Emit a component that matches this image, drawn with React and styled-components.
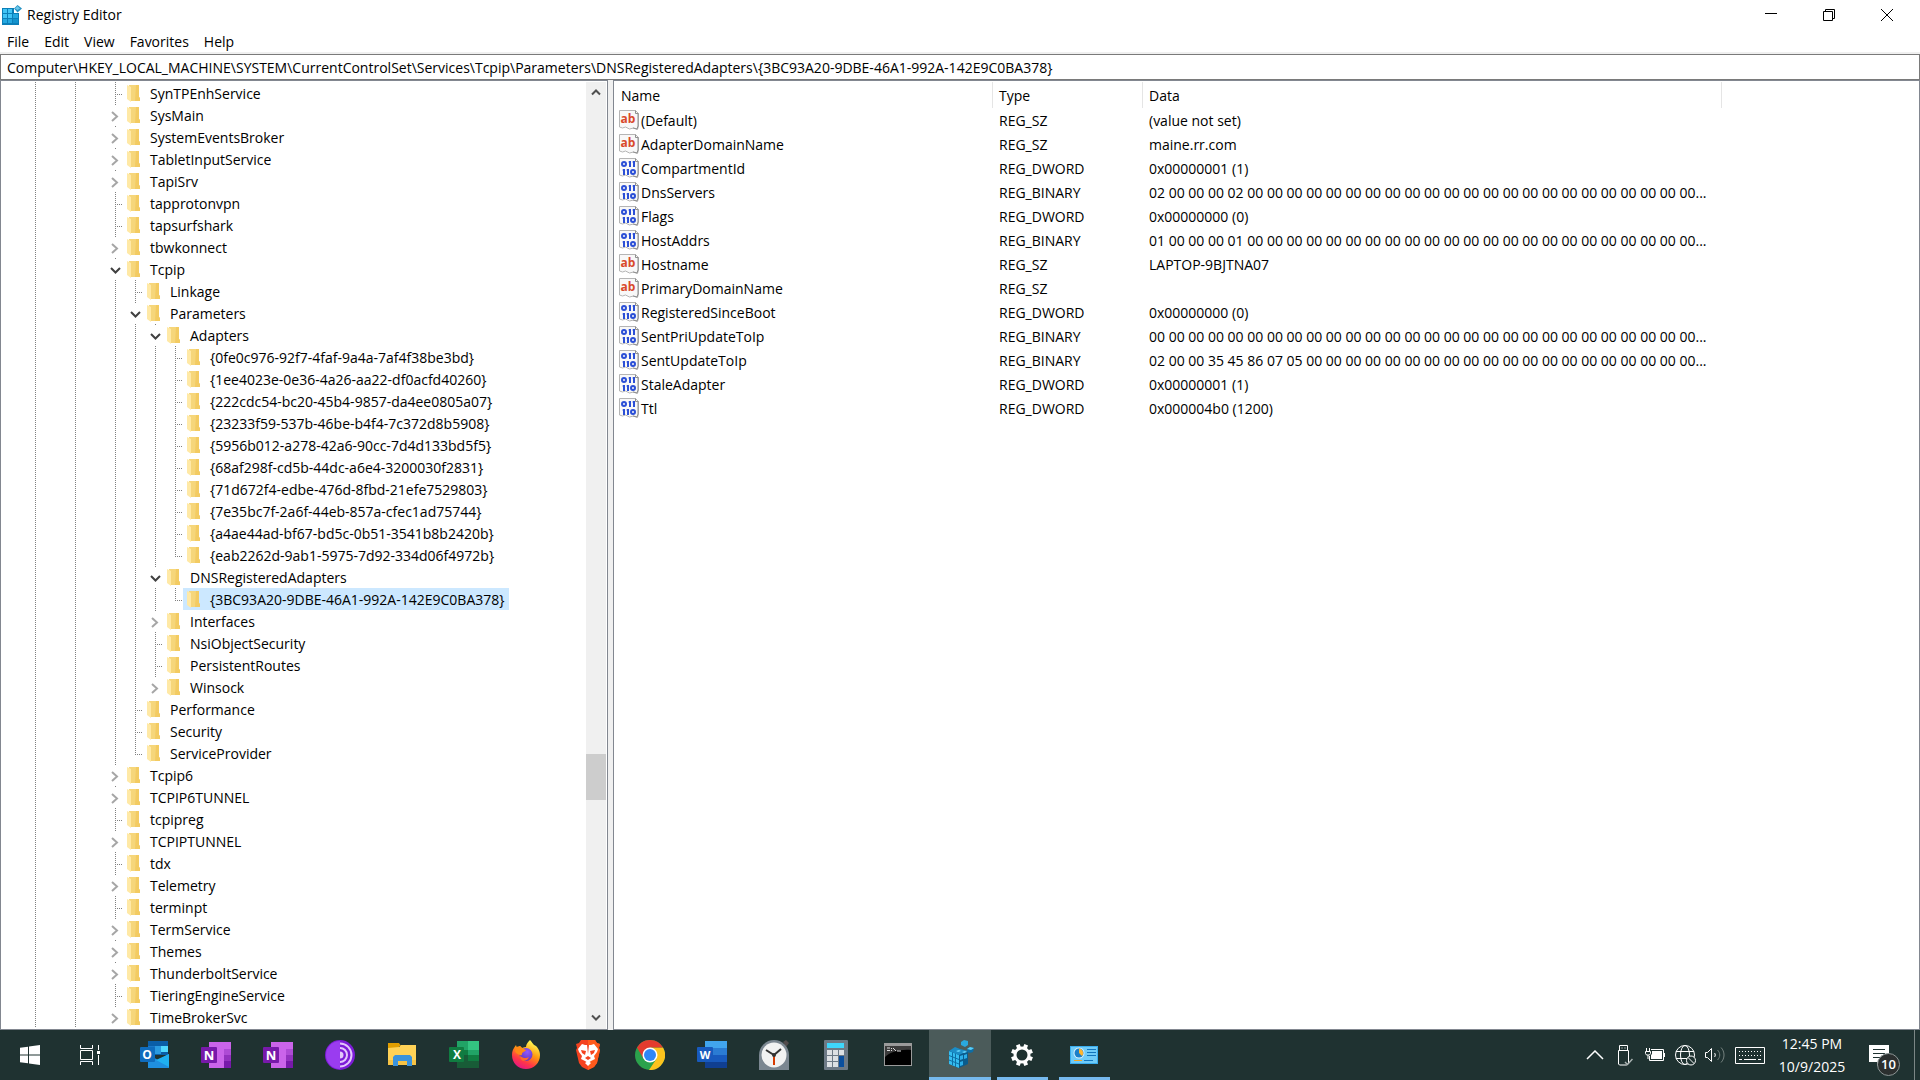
import React from "react";
import styled, { createGlobalStyle, css } from "styled-components";

const GlobalStyle = createGlobalStyle`
  * {
    box-sizing: border-box;
  }
  body {
    margin: 0;
    background: #fff;
    color: #000;
    font-family: "Open Sans", "Noto Sans", sans-serif;
    font-size: 14px;
    line-height: 22px;
  }
  button, input {
    font: inherit;
    color: inherit;
    border: none;
    background: none;
    padding: 0;
    margin: 0;
  }
  svg {
    display: block;
    flex: none;
  }
`;

const Window = styled.div`
  display: flex;
  flex-direction: column;
  height: 100vh;
  overflow: hidden;
`;

const TitleBar = styled.header`
  display: flex;
  align-items: center;
  height: 30px;
  padding: 0 4px 0 2px;
`;

const Title = styled.h1`
  flex: 1;
  margin: 0 0 0 5px;
  font-size: 14px;
  font-weight: 400;
`;

const WindowButton = styled.button`
  width: 58px;
  height: 30px;
  display: flex;
  align-items: center;
  justify-content: center;
`;

const MenuBar = styled.nav`
  display: flex;
  gap: 15px;
  height: 24px;
  padding: 0 7px;
  border-bottom: 2px solid #f0f0f0;
`;

const MenuItem = styled.button`
  height: 22px;
  padding-top: 1px;
`;

const Address = styled.input`
  width: 100%;
  height: 26px;
  flex: none;
  padding: 0 6px;
  border: 1px solid #7a7a7a;
  outline: none;
`;

const Body = styled.main`
  flex: 1;
  min-height: 0;
  display: flex;
  gap: 5px;
  background: #f0f0f0;
`;

const TreePane = styled.section`
  width: 608px;
  flex: none;
  display: flex;
  background: #fff;
  border: 1px solid #828790;
  padding: 1px 1px 0 0;
`;

const Tree = styled.ul`
  flex: 1;
  list-style: none;
  margin: 0;
  padding: 0 0 0 22px;
  overflow: hidden;
`;

const TreeRow = styled.li`
  display: flex;
  height: 22px;
`;

const dots = (dir) =>
  `repeating-linear-gradient(${dir}, #808080 0 1px, transparent 1px 2px)`;

// one 20px column of the tree: | line, + tee, L last child, > closed, v open
const lineStyles = {
  ".": css``,
  "|": css`
    background: ${dots("to bottom")} 12px 0 / 1px 22px no-repeat;
  `,
  "+": css`
    background: ${dots("to bottom")} 12px 0 / 1px 22px no-repeat,
      ${dots("to right")} 12px 12px / 8px 1px no-repeat;
  `,
  L: css`
    background: ${dots("to bottom")} 12px 0 / 1px 12px no-repeat,
      ${dots("to right")} 12px 12px / 8px 1px no-repeat;
  `,
  ">": css`
    background: ${dots("to bottom")} 12px 0 / 1px 1px no-repeat;
  `,
  v: css`
    background: ${dots("to bottom")} 12px 0 / 1px 1px no-repeat;
  `,
};

const Guide = styled.span`
  width: 20px;
  flex: none;
  ${({ $line }) => lineStyles[$line]}
`;

const Expander = styled.button`
  width: 20px;
  flex: none;
  padding: 2px 0 0 4px;
  display: flex;
  align-items: center;
  justify-content: center;
  ${({ $line }) => lineStyles[$line]}
`;

const KeyLabel = styled.span`
  display: flex;
  align-items: center;
  gap: 10px;
  padding: 0 4px;
  white-space: nowrap;
  background: ${({ $selected }) => ($selected ? "#cce8ff" : "none")};
`;

const KeyName = styled.span`
  padding-top: 2px;
`;

const ScrollBar = styled.div`
  width: 20px;
  display: grid;
  grid-template-rows: 21px 652fr 46px 208fr 21px;
  background: #f0f0f0;
`;

const ScrollArrow = styled.button`
  display: flex;
  align-items: center;
  justify-content: center;
  padding: 0 1px 2px 0;
`;

const ScrollThumb = styled.div`
  grid-row: 3;
  background: #cdcdcd;
`;

const ListPane = styled.section`
  flex: 1;
  min-width: 0;
  background: #fff;
  border: 1px solid #828790;
  padding-top: 1px;
  overflow: hidden;
`;

const ValueTable = styled.table`
  width: 100%;
  table-layout: fixed;
  border-collapse: separate;
  border-spacing: 0;
`;

const Heading = styled.th`
  width: ${({ $width }) => $width || "auto"};
  height: 26px;
  padding: 2px 6px 0;
  text-align: left;
  font-weight: 400;
  border-right: ${({ $width }) => ($width ? "1px solid #e5e5e5" : "none")};

  &:first-child {
    padding-left: 7px;
  }
`;

const Cell = styled.td`
  height: 24px;
  padding: 2px 6px 0;
  white-space: nowrap;
  overflow: hidden;
`;

const NameCell = styled(Cell)`
  padding: 0 5px;
`;

const ValueName = styled.div`
  display: flex;
  align-items: center;
  gap: 2px;
  height: 24px;
`;

const ValueText = styled.span`
  padding-top: 2px;
`;

const TaskBar = styled.footer`
  display: flex;
  flex: none;
  height: 50px;
  background: #1f3231;
  color: #fff;
`;

const AppButtons = styled.div`
  display: flex;
  padding-left: 3px;
`;

const TaskButton = styled.button`
  width: ${({ $narrow }) => ($narrow ? "60px" : "62px")};
  height: 50px;
  display: flex;
  align-items: center;
  justify-content: center;
  background: ${({ $active }) => ($active ? "#4b5b5a" : "none")};
  border-bottom: ${({ $active }) => ($active ? "3px solid #76b9ed" : "none")};
  padding-top: ${({ $active }) => ($active ? "3px" : "0")};
  ${({ $running }) =>
    $running &&
    css`
      background: linear-gradient(#76b9ed, #76b9ed) center bottom / 51px 3px
        no-repeat;
    `}
`;

const Tray = styled.div`
  flex: 1;
  display: flex;
  align-items: center;
  justify-content: flex-end;
`;

const TrayButton = styled.button`
  width: ${({ $wide }) => ($wide ? "40px" : "30px")};
  height: 50px;
  display: flex;
  align-items: center;
  justify-content: center;
`;

const Clock = styled.button`
  width: 84px;
  line-height: 23px;
  text-align: center;
`;

const Notifications = styled.button`
  position: relative;
  width: 60px;
  height: 50px;
  padding-left: 15px;
`;

const Badge = styled.span`
  position: absolute;
  left: 23px;
  bottom: 4px;
  width: 23px;
  height: 23px;
  border: 1px solid #8c9595;
  border-radius: 50%;
  background: #2b2f2f;
  font-size: 13px;
  font-weight: 600;
  line-height: 20px;
  text-align: center;
`;

const ShowDesktop = styled.button`
  width: 6px;
  height: 50px;
  border-left: 1px solid #7b8685;
`;

const KEYS = [
  ["|.|.+", "SynTPEnhService"],
  ["|.|.>", "SysMain"],
  ["|.|.>", "SystemEventsBroker"],
  ["|.|.>", "TabletInputService"],
  ["|.|.>", "TapiSrv"],
  ["|.|.+", "tapprotonvpn"],
  ["|.|.+", "tapsurfshark"],
  ["|.|.>", "tbwkonnect"],
  ["|.|.v", "Tcpip"],
  ["|.|.|+", "Linkage"],
  ["|.|.|v", "Parameters"],
  ["|.|.||v", "Adapters"],
  ["|.|.|||+", "{0fe0c976-92f7-4faf-9a4a-7af4f38be3bd}"],
  ["|.|.|||+", "{1ee4023e-0e36-4a26-aa22-df0acfd40260}"],
  ["|.|.|||+", "{222cdc54-bc20-45b4-9857-da4ee0805a07}"],
  ["|.|.|||+", "{23233f59-537b-46be-b4f4-7c372d8b5908}"],
  ["|.|.|||+", "{5956b012-a278-42a6-90cc-7d4d133bd5f5}"],
  ["|.|.|||+", "{68af298f-cd5b-44dc-a6e4-3200030f2831}"],
  ["|.|.|||+", "{71d672f4-edbe-476d-8fbd-21efe7529803}"],
  ["|.|.|||+", "{7e35bc7f-2a6f-44eb-857a-cfec1ad75744}"],
  ["|.|.|||+", "{a4ae44ad-bf67-bd5c-0b51-3541b8b2420b}"],
  ["|.|.|||L", "{eab2262d-9ab1-5975-7d92-334d06f4972b}"],
  ["|.|.||v", "DNSRegisteredAdapters"],
  ["|.|.|||L", "{3BC93A20-9DBE-46A1-992A-142E9C0BA378}"],
  ["|.|.||>", "Interfaces"],
  ["|.|.||+", "NsiObjectSecurity"],
  ["|.|.||+", "PersistentRoutes"],
  ["|.|.||>", "Winsock"],
  ["|.|.|+", "Performance"],
  ["|.|.|+", "Security"],
  ["|.|.|L", "ServiceProvider"],
  ["|.|.>", "Tcpip6"],
  ["|.|.>", "TCPIP6TUNNEL"],
  ["|.|.+", "tcpipreg"],
  ["|.|.>", "TCPIPTUNNEL"],
  ["|.|.+", "tdx"],
  ["|.|.>", "Telemetry"],
  ["|.|.+", "terminpt"],
  ["|.|.>", "TermService"],
  ["|.|.>", "Themes"],
  ["|.|.>", "ThunderboltService"],
  ["|.|.+", "TieringEngineService"],
  ["|.|.>", "TimeBrokerSvc"],
];

const SELECTED = "{3BC93A20-9DBE-46A1-992A-142E9C0BA378}";
const PATH =
  "Computer\\HKEY_LOCAL_MACHINE\\SYSTEM\\CurrentControlSet\\Services\\Tcpip\\Parameters\\DNSRegisteredAdapters\\" +
  SELECTED;

// the data column shows 28 bytes and then cuts off
const bytes = (start) => {
  const list = start.split(" ");
  while (list.length < 28) list.push("00");
  return list.join(" ") + "...";
};

const VALUES = [
  ["(Default)", "REG_SZ", "(value not set)"],
  ["AdapterDomainName", "REG_SZ", "maine.rr.com"],
  ["CompartmentId", "REG_DWORD", "0x00000001 (1)"],
  ["DnsServers", "REG_BINARY", bytes("02 00 00 00 02")],
  ["Flags", "REG_DWORD", "0x00000000 (0)"],
  ["HostAddrs", "REG_BINARY", bytes("01 00 00 00 01")],
  ["Hostname", "REG_SZ", "LAPTOP-9BJTNA07"],
  ["PrimaryDomainName", "REG_SZ", ""],
  ["RegisteredSinceBoot", "REG_DWORD", "0x00000000 (0)"],
  ["SentPriUpdateToIp", "REG_BINARY", bytes("00")],
  ["SentUpdateToIp", "REG_BINARY", bytes("02 00 00 35 45 86 07 05")],
  ["StaleAdapter", "REG_DWORD", "0x00000001 (1)"],
  ["Ttl", "REG_DWORD", "0x000004b0 (1200)"],
];

const FolderIcon = () => (
  <svg width="13" height="17" viewBox="0 0 13 17">
    <path d="M2 0h10v12l1 1v3H3z" fill="#f6d67a" />
    <path d="M9 0h3v12l1 1v3H8z" fill="#f3cb62" />
    <path d="M0 0l4 2v15l-4-3z" fill="#ffe9a6" />
  </svg>
);

const ClosedIcon = () => (
  <svg width="8" height="11" viewBox="0 0 8 11" fill="none" stroke="#a6a6a6" strokeWidth="2">
    <path d="M1 1l5 4.500-5 4.500" />
  </svg>
);

const OpenIcon = () => (
  <svg width="11" height="7" viewBox="0 0 11 7" fill="none" stroke="#404040" strokeWidth="2">
    <path d="M1 1l4.500 4.500L10 1" />
  </svg>
);

const ScrollIcon = ({ down }) => (
  <svg width="10" height="8" viewBox="0 0 10 8" fill="none" stroke="#505050" strokeWidth="2">
    <path d={down ? "M1 1.500l4 4 4-4" : "M1 6.500l4-4 4 4"} />
  </svg>
);

const RegeditSmallIcon = () => (
  <svg width="20" height="20" viewBox="0 0 20 20">
    <path d="M0 3h12v5h5v12H0z" fill="#0c7fb8" />
    <path d="M1 4h4v4H1zM6 4h4v4H6zM1 9h4v4H1zM6 9h4v4H6z" fill="#41c4f5" />
    <path d="M11 9h5v4h-5zM1 14h4v4H1zM6 14h4v4H6z" fill="#25a8e0" />
    <path d="M11 14h5v4h-5z" fill="#1493cd" />
    <path d="M15.500 0L20 3.500 15.500 7.500 12 3.500z" fill="#2793c4" />
    <path d="M15.500 1L18 3.500 15.500 5 13 3.500z" fill="#6cc7ea" />
  </svg>
);

const Page = () => (
  <>
    <path d="M.500.500h16l3 3V16l-1 3.500-4-1.500-4 1-4-2-3 1-3-1z" fill="#f8f8f8" stroke="#b5b5b5" />
    <path d="M16.500.500v3h3M19 4v12l-1 3-4-1" fill="none" stroke="#8f8f8f" />
  </>
);

const StringIcon = () => (
  <svg width="20" height="20" viewBox="0 0 20 20">
    <Page />
    <text x="9" y="13" textAnchor="middle" fontFamily="Open Sans, sans-serif" fontSize="12" fontWeight="700" fill="#d9492b">
      ab
    </text>
  </svg>
);

const BinaryIcon = () => (
  <svg width="20" height="20" viewBox="0 0 20 20">
    <Page />
    <g fill="none" stroke="#2b4fd6" strokeWidth="2">
      <rect x="3" y="4" width="4" height="4" rx="2" />
      <path d="M11 3v6M15 3v6M5 11v6M9 11v6" />
      <rect x="12" y="12" width="4" height="4" rx="2" />
      <path d="M9.500 4H12M13.500 4H16M3.500 12H6M7.500 12H10" strokeWidth="1" />
    </g>
  </svg>
);

const StartIcon = () => (
  <svg width="20" height="20" viewBox="0 0 20 20" fill="#fff">
    <path d="M0 2.800l8-1.100v7.800H0zM9 1.500L20 0v9.500H9zM0 10.500h8v7.800l-8-1.100zM9 10.500h11V20L9 18.500z" />
  </svg>
);

const TaskViewIcon = () => (
  <svg width="20" height="20" viewBox="0 0 20 20" fill="none" stroke="#fff">
    <path d="M.500 0v3.500h12V0M.500 5.500h12v9H.500zM.500 20v-3.500h12V20M18.500 0v5M18.500 10v10" />
    <path d="M17 6h3v3h-3z" fill="#fff" stroke="none" />
  </svg>
);

const Letter = ({ x, y, size = 12, children }) => (
  <text x={x} y={y} textAnchor="middle" fontFamily="Open Sans, sans-serif" fontSize={size} fontWeight="700" fill="#fff">
    {children}
  </text>
);

const OutlookIcon = () => (
  <svg width="30" height="30" viewBox="0 0 30 30">
    <path d="M9 1h20v14H9z" fill="#0a5ea8" />
    <path d="M9 6h7v8H9z" fill="#1a78c8" />
    <path d="M16 6h6v8h-6z" fill="#2a9ae0" />
    <path d="M22 6h7v6h-7z" fill="#50d9ff" />
    <path d="M9 14l10 6 11-6v14H9z" fill="#1f8fdf" />
    <path d="M30 14v13L17 20z" fill="#1fb0f0" />
    <rect x="1" y="7" width="15" height="15" rx="1" fill="#0f6cbd" />
    <Letter x={8} y={19}>O</Letter>
  </svg>
);

const OneNoteIcon = () => (
  <svg width="30" height="30" viewBox="0 0 30 30">
    <path d="M8 2h16v26H8z" fill="#ca64ea" />
    <path d="M23 2h7v7h-7z" fill="#ca64ea" />
    <path d="M23 9h7v6h-7z" fill="#ae4bd5" />
    <path d="M23 15h7v6h-7z" fill="#9332bf" />
    <path d="M23 21h7v7h-7z" fill="#7719aa" />
    <rect x="0" y="7" width="16" height="16" rx="1" fill="#7719aa" />
    <Letter x={8} y={20} size={13}>N</Letter>
  </svg>
);

const TorIcon = () => (
  <svg width="30" height="30" viewBox="0 0 30 30">
    <circle cx="15" cy="15" r="15" fill="#7d1bd8" />
    <path d="M15 1a14 14 0 0 0 0 28z" fill="#9a3cf0" />
    <g fill="none" stroke="#e3c6fb" strokeWidth="2">
      <path d="M15 3.500a11.500 11.500 0 0 1 0 23M15 8a7 7 0 0 1 0 14" />
    </g>
    <path d="M15 11.500a3.500 3.500 0 0 1 0 7z" fill="#e3c6fb" />
  </svg>
);

const ExplorerIcon = () => (
  <svg width="30" height="30" viewBox="0 0 30 30">
    <path d="M1 3h11l2 3h-2v4H1z" fill="#e19e00" />
    <path d="M1 8l11-1 2-2h15v20H1z" fill="#ffd257" />
    <path d="M1 20h28v5H1z" fill="#f6c344" />
    <path d="M6 26V17l2-2h15l2 2v9h-5v-5h-9v5z" fill="#3a93dd" />
  </svg>
);

const ExcelIcon = () => (
  <svg width="30" height="30" viewBox="0 0 30 30">
    <path d="M8 1h11v9H8z" fill="#21a366" />
    <path d="M19 1h11v9H19z" fill="#33c481" />
    <path d="M8 10h11v6H8z" fill="#107c41" />
    <path d="M19 10h11v6H19z" fill="#21a366" />
    <path d="M8 15h11v13H8z" fill="#185c37" />
    <path d="M19 15h11v6H19z" fill="#107c41" />
    <path d="M19 21h11v7H19z" fill="#185c37" />
    <rect x="0" y="7" width="15" height="15" rx="1" fill="#107c41" />
    <Letter x={8} y={19}>X</Letter>
  </svg>
);

const FirefoxIcon = () => (
  <svg width="30" height="30" viewBox="0 0 30 30">
    <defs>
      <linearGradient id="fox" x1="0.800" y1="0" x2="0.300" y2="1">
        <stop offset="0.100" stopColor="#fff44f" />
        <stop offset="0.450" stopColor="#ff980e" />
        <stop offset="0.750" stopColor="#ff3647" />
        <stop offset="1" stopColor="#e31587" />
      </linearGradient>
      <radialGradient id="globe" cx="0.600" cy="0.300" r="0.800">
        <stop offset="0" stopColor="#9059ff" />
        <stop offset="1" stopColor="#5b2fb5" />
      </radialGradient>
    </defs>
    <path d="M19 0c2 2 3 4 4 5 1 0 2 1 3 2 2 3 3 5 3 8 0 8-6 14-14 14S1 23 1 15c0-4 1-6 4-10l1 3 3-2 2 2c2-1 3-1 4-1 0-3 2-5 4-7z" fill="url(#fox)" />
    <circle cx="15" cy="14.500" r="6.500" fill="url(#globe)" />
    <path d="M5 7l4-1 2 2 4 2c-1 2-4 2-4 4 0 1-1 2-2 1-2-1-4-1-5-4z" fill="#ff8a16" />
    <path d="M9 16c3 2 6 3 9 1-1 3-4 4-6 4-2-1-3-3-3-5z" fill="#ff6a2a" />
  </svg>
);

const BraveIcon = () => (
  <svg width="30" height="30" viewBox="0 0 30 30">
    <path d="M8 0h14l2 3 3 1-1 4 1 2-3 13-3 4-6 3-6-3-3-4L3 10l1-2-1-4 3-1z" fill="#f4421f" />
    <path d="M15 0h7l2 3 3 1-1 4 1 2-3 13-3 4-6 3z" fill="#ff5a1c" />
    <path d="M9 4l3 1h6l3-1 4 5-1 3-3 4 1 3-4 2-3 2-3-2-4-2 1-3-3-4-1-3z" fill="#fff" />
    <path d="M8 10l5 1-1 4-3-2zM22 10l-5 1 1 4 3-2zM12 18l3-2 3 2-3 2zM14 5h2l-1 9z" fill="#f4421f" />
    <path d="M12 23l3-2 3 2-3 3z" fill="#fff" />
  </svg>
);

const ChromeIcon = () => (
  <svg width="30" height="30" viewBox="0 0 30 30">
    <circle cx="15" cy="15" r="15" fill="#2ba24c" />
    <path d="M15 7.500h13A15 15 0 0 1 14 30l7.500-11.200z" fill="#fcc31e" />
    <path d="M2.010 7.500A15 15 0 0 1 28 7.500H15L8.500 18.800z" fill="#e33b2e" />
    <circle cx="15" cy="15" r="7.500" fill="#fff" />
    <circle cx="15" cy="15" r="6" fill="#3086f6" />
  </svg>
);

const WordIcon = () => (
  <svg width="30" height="30" viewBox="0 0 30 30">
    <path d="M8 1h22v7H8z" fill="#41a5ee" />
    <path d="M8 8h22v7H8z" fill="#2b7cd3" />
    <path d="M8 15h22v7H8z" fill="#185abd" />
    <path d="M8 22h22v6H8z" fill="#103f91" />
    <rect x="0" y="7" width="16" height="15" rx="1" fill="#185abd" />
    <Letter x={8} y={19} size={11}>W</Letter>
  </svg>
);

const ClockIcon = () => (
  <svg width="30" height="30" viewBox="0 0 30 30">
    <path d="M24 2l3-2 3 3-3 4z" fill="#514b4b" />
    <path d="M0 15a15 15 0 0 1 30 0v15H0z" fill="#7b8791" />
    <circle cx="15" cy="15" r="12.500" fill="#f1f2f2" />
    <path d="M15 15v10" stroke="#d83b01" strokeWidth="2" />
    <path d="M7 10l8 5 7-6" fill="none" stroke="#333" strokeWidth="2" />
    <circle cx="15" cy="15" r="2" fill="#333" />
  </svg>
);

const CalculatorIcon = () => (
  <svg width="30" height="30" viewBox="0 0 30 30">
    <rect x="3" y="0" width="24" height="30" rx="1" fill="#6d7a86" />
    <path d="M6 3h17v5H6z" fill="#3fd6fb" />
    <path d="M6 10h5v5H6zM12 10h5v5h-5zM18 10h5v5h-5zM6 16h5v5H6zM12 16h5v5h-5zM6 22h5v5H6zM12 22h5v5h-5z" fill="#dde1e4" />
    <path d="M18 16h5v11h-5z" fill="#0a4f9e" />
  </svg>
);

const CommandIcon = () => (
  <svg width="30" height="30" viewBox="0 0 30 30">
    <path d="M1 3h28v23H1z" fill="#9a9a9a" />
    <path d="M2 6h26v19H2z" fill="#000" />
    <path d="M2 6h26v4C17 9 7 12 2 17z" fill="#3b3b3b" />
    <path d="M4 8h3M4 10.500h3M8.500 8v1M8.500 10v1M10 8l3 3M14 11h4" stroke="#ddd" fill="none" />
  </svg>
);

const RegeditIcon = () => (
  <svg width="30" height="30" viewBox="0 0 30 30">
    <path d="M4 11l6-3 13 4v12l-9 4-10-4z" fill="#0a5c8c" />
    <path d="M4 11l10 4v13L4 24z" fill="#35bdf0" />
    <path d="M4 15.500l10 4M4 20l10 4M7.500 12v13M10.500 13v14" stroke="#0d6fa5" />
    <path d="M4 11l6-4 5 2 8 2-9 4z" fill="#1b8dc7" />
    <path d="M11 11l3-1 2 1-3 1zM17 12l3-1 2 1-3 1z" fill="#63d3fa" />
    <path d="M15 16l3-1v4l-3 1zM19 15l3-1v4l-3 1zM15 22l3-1v4l-3 1z" fill="#2baee8" />
    <path d="M16 2l3-2 4 1v4l-3 2-4-2z" fill="#2aa8de" />
    <path d="M22 9l3-2 4 1-1 4-3 1-3-1z" fill="#0e6ea5" />
    <path d="M22 9l3-2 4 1-3 2z" fill="#58cdf8" />
  </svg>
);

const SettingsIcon = () => (
  <svg width="24" height="24" viewBox="0 0 24 24">
    {[0, 45, 90, 135].map((angle) => (
      <path key={angle} d="M10 1h4v4h-4zM10 19h4v4h-4z" fill="#fff" transform={`rotate(${angle + 22.5} 12 12)`} />
    ))}
    <circle cx="12" cy="12" r="7" fill="none" stroke="#fff" strokeWidth="3" />
  </svg>
);

const ControlPanelIcon = () => (
  <svg width="28" height="18" viewBox="0 0 28 18">
    <rect width="28" height="18" fill="#39adee" />
    <path d="M1 1h26v16H1z" fill="#6fcbf8" />
    <circle cx="9" cy="7" r="5.500" fill="#d9f1fd" />
    <circle cx="9" cy="7" r="4.500" fill="#1b7fc9" />
    <path d="M9 7V2.500A4.500 4.500 0 0 1 12 10z" fill="#ffb52e" />
    <path d="M17 3.500h9M17 6.500h9M17 9.500h9" stroke="#1274bd" />
    <path d="M4 14.500h8" stroke="#f5a623" />
    <path d="M14 14.500h9" stroke="#1274bd" />
  </svg>
);

const APPS = [
  ["Outlook", OutlookIcon],
  ["OneNote", OneNoteIcon],
  ["OneNote for Windows", OneNoteIcon],
  ["Tor Browser", TorIcon],
  ["File Explorer", ExplorerIcon],
  ["Excel", ExcelIcon],
  ["Firefox", FirefoxIcon],
  ["Brave", BraveIcon],
  ["Chrome", ChromeIcon],
  ["Word", WordIcon],
  ["Alarms & Clock", ClockIcon],
  ["Calculator", CalculatorIcon],
  ["Command Prompt", CommandIcon],
  ["Registry Editor", RegeditIcon, "active"],
  ["Settings", SettingsIcon, "running"],
  ["Control Panel", ControlPanelIcon, "running"],
];

const KeyRow = ({ guides, name }) => {
  const last = guides[guides.length - 1];
  const selected = name === SELECTED;
  return (
    <TreeRow role="treeitem" aria-level={guides.length} aria-selected={selected}>
      {guides.slice(0, -1).split("").map((line, i) => (
        <Guide key={i} $line={line} />
      ))}
      {last === ">" || last === "v" ? (
        <Expander $line={last} aria-label={(last === "v" ? "Collapse " : "Expand ") + name}>
          {last === "v" ? <OpenIcon /> : <ClosedIcon />}
        </Expander>
      ) : (
        <Guide $line={last} />
      )}
      <KeyLabel $selected={selected}>
        <FolderIcon />
        <KeyName>{name}</KeyName>
      </KeyLabel>
    </TreeRow>
  );
};

const TrayIcons = () => (
  <>
    <TrayButton aria-label="Show hidden icons">
      <svg width="18" height="10" viewBox="0 0 18 10" fill="none" stroke="#fff" strokeWidth="1.500">
        <path d="M1 9l8-8 8 8" />
      </svg>
    </TrayButton>
    <TrayButton aria-label="Safely remove hardware">
      <svg width="16" height="21" viewBox="0 0 16 21" fill="none" stroke="#fff">
        <path d="M2.500 5.500v-5h8v5M1.500 5.500h10v13l-2 1.500h-7l-1-1zM4.500 3h1M7.500 3h1" />
        <path d="M8 17l2.500 2.500L15.500 14" stroke="#aab3b2" strokeWidth="1.500" />
      </svg>
    </TrayButton>
    <TrayButton aria-label="Battery">
      <svg width="20" height="14" viewBox="0 0 20 14" fill="none" stroke="#fff">
        <path d="M6 1.500h12.500v11H4.500V8M19.500 5v4M1.500 0v3M4.500 0v3M.500 3.500h5v2l-1 1.500h-3l-1-1.500zM3 7v4" />
        <path d="M7 3h10v8H6V7l1-1z" fill="#fff" stroke="none" />
      </svg>
    </TrayButton>
    <TrayButton aria-label="Network">
      <svg width="21" height="21" viewBox="0 0 21 21" fill="none" stroke="#fff">
        <circle cx="10" cy="10" r="9.500" />
        <ellipse cx="10" cy="10" rx="4.500" ry="9.500" />
        <path d="M1 6.500h18M1 13.500h12" />
        <circle cx="16" cy="15.500" r="4.500" fill="#1f3231" />
        <path d="M13 12.500l6 6" />
      </svg>
    </TrayButton>
    <TrayButton aria-label="Volume">
      <svg width="20" height="18" viewBox="0 0 20 18" fill="none" stroke="#fff">
        <path d="M.500 6.500h2l4-4v13l-4-4h-2z" />
        <path d="M9.500 7c1 1 1 3 0 4" />
        <path d="M12.500 4c3 3 3 7 0 10M16 1.500c4 4 4 11 0 15" stroke="#75827f" />
      </svg>
    </TrayButton>
    <TrayButton $wide aria-label="Touch keyboard">
      <svg width="30" height="17" viewBox="0 0 30 17" fill="none" stroke="#fff">
        <path d="M.500.500h29v16H.500z" />
        <path d="M4 4.500h22M4 8.500h22" strokeDasharray="1 2" />
        <path d="M4 12.500h3M9 12.500h12M23 12.500h3" />
      </svg>
    </TrayButton>
  </>
);

const App = () => {
  return (
    <Window>
      <GlobalStyle />
      <TitleBar>
        <RegeditSmallIcon />
        <Title>Registry Editor</Title>
        <WindowButton aria-label="Minimize">
          <svg width="12" height="12" viewBox="0 0 12 12" stroke="#000">
            <path d="M0 4.500h12" />
          </svg>
        </WindowButton>
        <WindowButton aria-label="Restore">
          <svg width="12" height="12" viewBox="0 0 12 12" fill="none" stroke="#000">
            <path d="M.500 2.500h9v9h-9zM2.500 2V.500h9v9H10" />
          </svg>
        </WindowButton>
        <WindowButton aria-label="Close">
          <svg width="12" height="12" viewBox="0 0 12 12" stroke="#000">
            <path d="M0 0l12 12M12 0L0 12" />
          </svg>
        </WindowButton>
      </TitleBar>
      <MenuBar>
        {["File", "Edit", "View", "Favorites", "Help"].map((item) => (
          <MenuItem key={item}>{item}</MenuItem>
        ))}
      </MenuBar>
      <Address aria-label="Address" defaultValue={PATH} spellCheck={false} />
      <Body>
        <TreePane>
          <Tree role="tree" aria-label="Registry keys">
            {KEYS.map(([guides, name]) => (
              <KeyRow key={name} guides={guides} name={name} />
            ))}
          </Tree>
          <ScrollBar>
            <ScrollArrow aria-label="Scroll up">
              <ScrollIcon />
            </ScrollArrow>
            <span />
            <ScrollThumb />
            <span />
            <ScrollArrow aria-label="Scroll down">
              <ScrollIcon down />
            </ScrollArrow>
          </ScrollBar>
        </TreePane>
        <ListPane>
          <ValueTable>
            <thead>
              <tr>
                <Heading $width="379px">Name</Heading>
                <Heading $width="150px">Type</Heading>
                <Heading $width="579px">Data</Heading>
                <Heading aria-hidden="true" />
              </tr>
            </thead>
            <tbody>
              {VALUES.map(([name, type, data]) => (
                <tr key={name}>
                  <NameCell>
                    <ValueName>
                      {type === "REG_SZ" ? <StringIcon /> : <BinaryIcon />}
                      <ValueText>{name}</ValueText>
                    </ValueName>
                  </NameCell>
                  <Cell>{type}</Cell>
                  <Cell>{data}</Cell>
                </tr>
              ))}
            </tbody>
          </ValueTable>
        </ListPane>
      </Body>
      <TaskBar>
        <TaskButton $narrow aria-label="Start">
          <StartIcon />
        </TaskButton>
        <TaskButton $narrow aria-label="Task View">
          <TaskViewIcon />
        </TaskButton>
        <AppButtons>
          {APPS.map(([name, Icon, state]) => (
            <TaskButton
              key={name}
              aria-label={name}
              $active={state === "active"}
              $running={state === "running"}
            >
              <Icon />
            </TaskButton>
          ))}
        </AppButtons>
        <Tray>
          <TrayIcons />
          <Clock>
            12:45 PM
            <br />
            10/9/2025
          </Clock>
          <Notifications aria-label="10 new notifications">
            <svg width="20" height="21" viewBox="0 0 20 21">
              <path d="M0 0h20v17h-8l-4 4v-4H0z" fill="#fff" />
              <path d="M4 4.500h12M4 8.500h12M4 12.500h8" stroke="#1f3231" />
            </svg>
            <Badge>10</Badge>
          </Notifications>
          <ShowDesktop aria-label="Show desktop" />
        </Tray>
      </TaskBar>
    </Window>
  );
};

export default App;
